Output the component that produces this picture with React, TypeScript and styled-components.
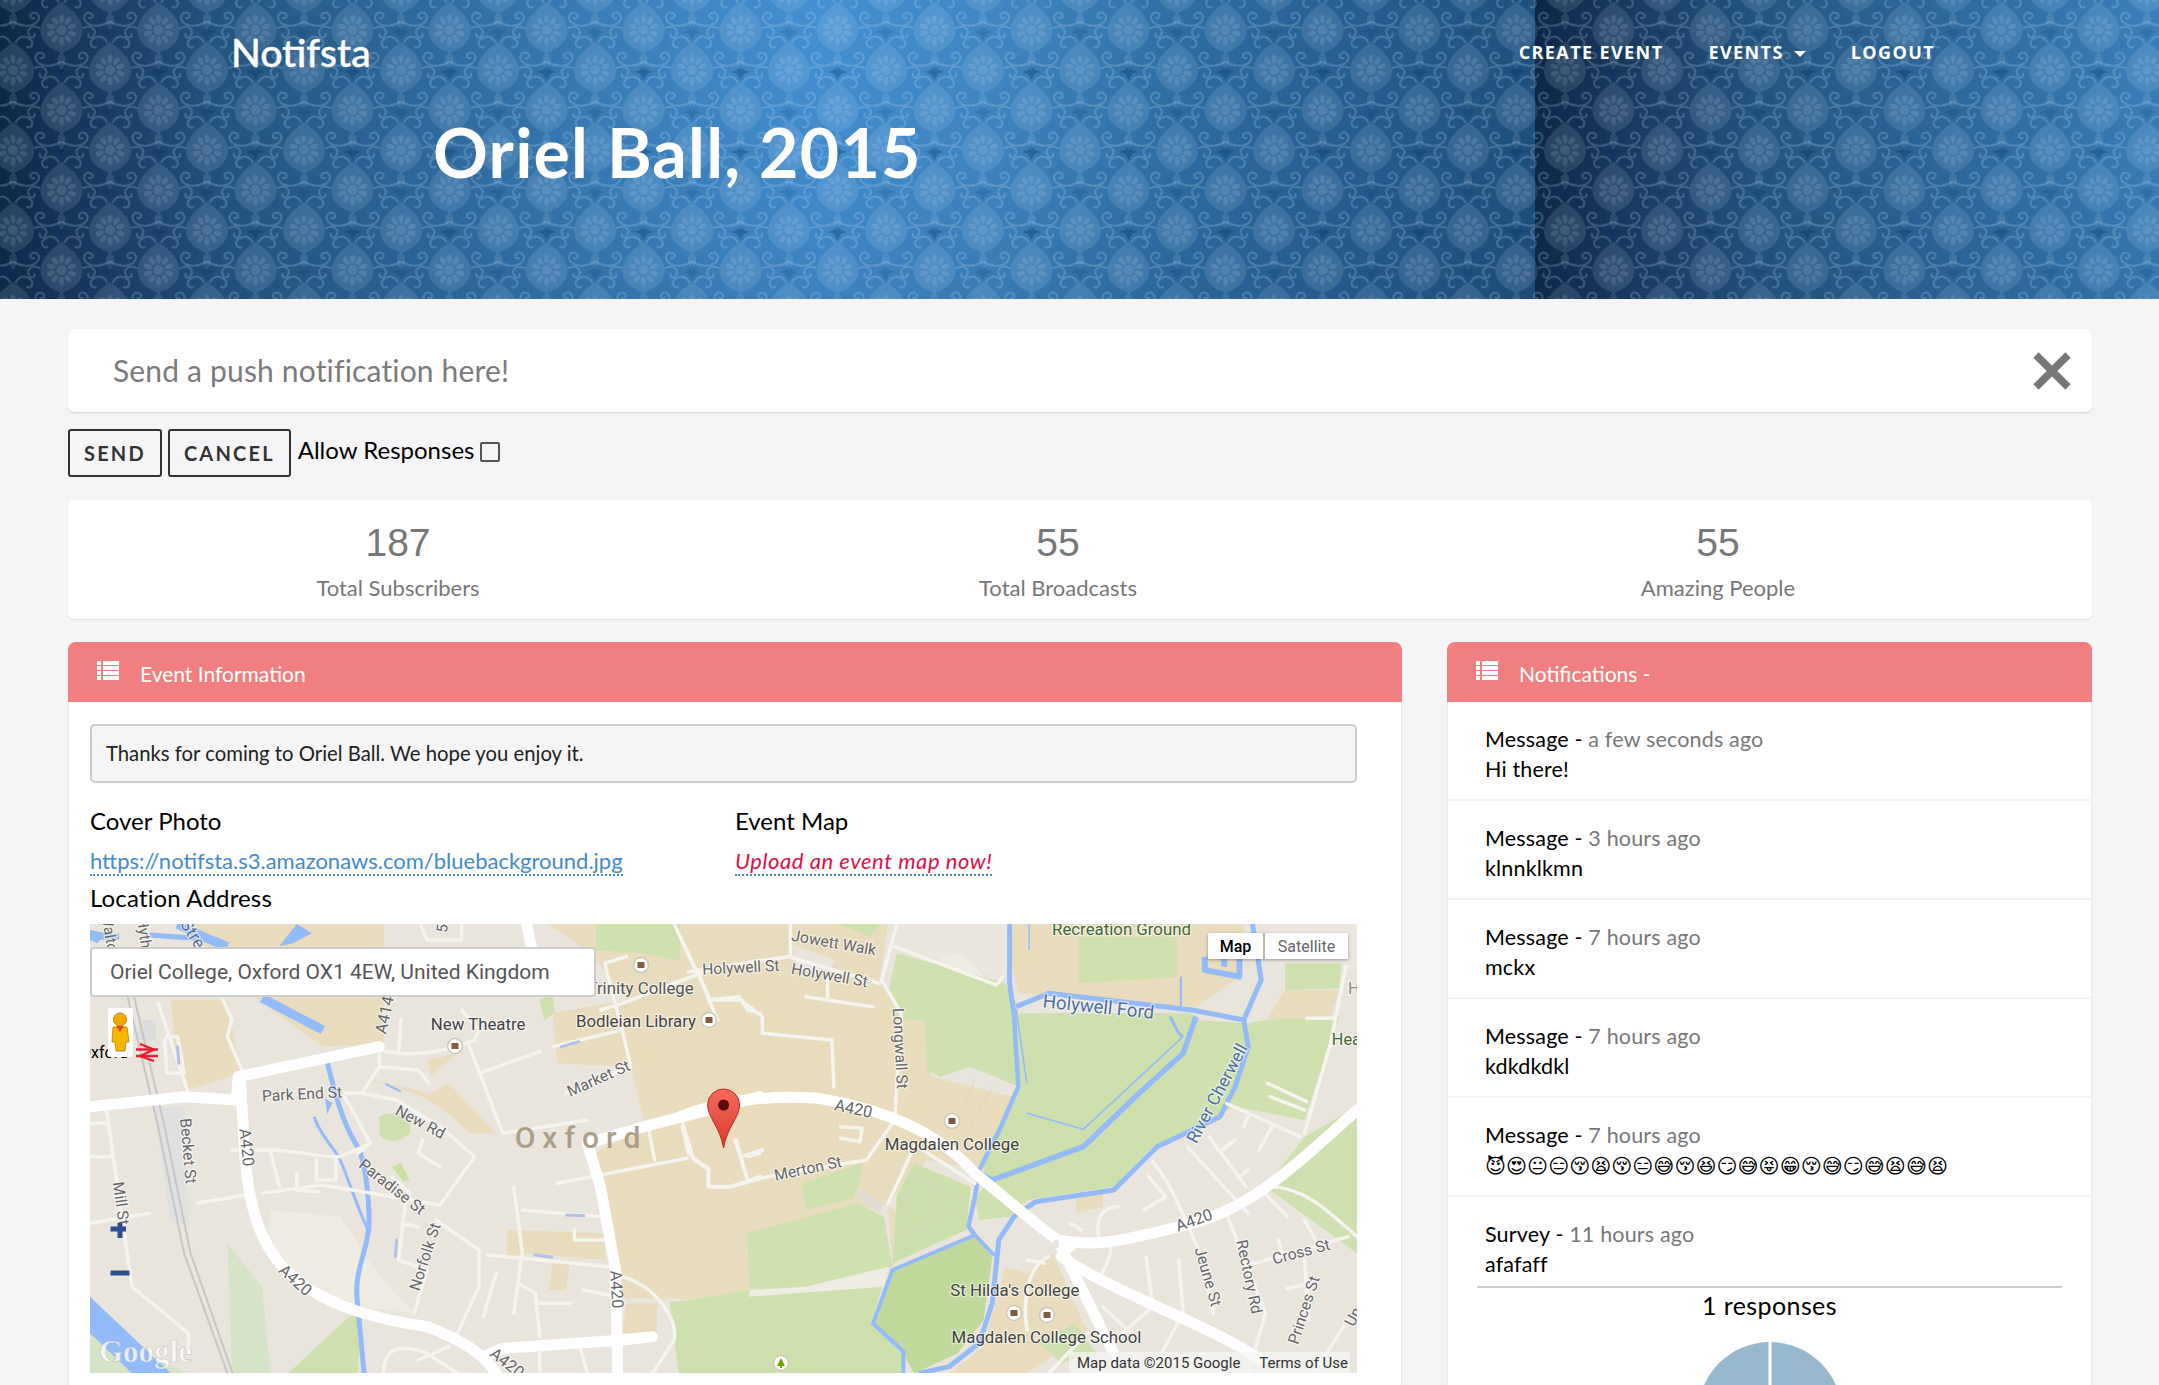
import React from 'react';
import styled, { createGlobalStyle } from 'styled-components';

const Global = createGlobalStyle`
  html, body { margin: 0; padding: 0; height: 1385px; overflow: hidden; background: #f5f5f7; }
  body { font-family: "Lato", "Noto Sans", sans-serif; color: #000; }
  * { box-sizing: border-box; }
`;

const Page = styled.div`
  width: 2159px;
  height: 1385px;
  overflow: hidden;
`;

const Hero = styled.header`
  position: relative;
  height: 299px;
  overflow: hidden;
  color: #fff;
  background-color: #1f4a75;
  background-image:
    linear-gradient(180deg, rgba(20, 50, 90, 0) 0%, rgba(20, 50, 90, 0.06) 60%, rgba(20, 50, 90, 0.16) 100%),
    linear-gradient(90deg, #0c2746 0, #173a5e 90px, #24547f 220px, #2f6a9e 420px, #3a7fba 620px, #4490d2 820px, #3f86c2 1000px, #2f6ea4 1180px, #275e90 1350px, #20507d 1534px);
  background-size: 100% 100%, 1535px 100%;
  background-repeat: no-repeat, repeat-x;
`;

const Wallpaper = styled.svg`
  position: absolute;
  inset: 0;
  width: 100%;
  height: 100%;
`;

const HeroContent = styled.div`
  position: relative;
  height: 100%;
  display: flex;
  flex-direction: column;
`;

const NavBar = styled.nav`
  display: flex;
  align-items: center;
  justify-content: space-between;
  padding: 26px 224px 0 231px;
  height: 78px;
`;

const Brand = styled.div`
  font-size: 39px;
  line-height: 52px;
  font-weight: 500;
  -webkit-text-stroke: 0.4px #fff;
`;

const NavLinks = styled.div`
  display: flex;
  align-items: center;
  gap: 45px;
`;

const NavLink = styled.a`
  font-family: "Open Sans", sans-serif;
  font-size: 18px;
  font-weight: 700;
  letter-spacing: 1.4px;
  text-transform: uppercase;
  line-height: 24px;
  display: flex;
  align-items: center;
  gap: 10px;
`;

const Caret = styled.span`
  width: 0;
  height: 0;
  margin-top: 4px;
  border-left: 6px solid transparent;
  border-right: 6px solid transparent;
  border-top: 6px solid #fff;
`;

const EventTitle = styled.h1`
  margin: 35px 0 0 433px;
  font-size: 68px;
  line-height: 78px;
  font-weight: 700;
  letter-spacing: 1.2px;
`;

const Main = styled.main`
  padding: 30px 67px 0 68px;
`;

const ComposeCard = styled.div`
  height: 83px;
  background: #fff;
  border-radius: 6px;
  box-shadow: 0 1px 2px rgba(0, 0, 0, 0.14);
  display: flex;
  align-items: center;
  justify-content: space-between;
  padding: 0 20px 2px 45px;
`;

const ComposeText = styled.div`
  font-size: 30px;
  color: #7b7b7b;
  letter-spacing: 0.17px;
`;

const CloseMark = styled.svg`
  margin-top: 2px;
`;

const ActionRow = styled.div`
  margin-top: 17px;
  display: flex;
  align-items: flex-start;
  gap: 6px;
`;

const OutlineButton = styled.button`
  height: 48px;
  padding: 0 14px;
  background: transparent;
  border: 2px solid #333;
  border-radius: 3px;
  color: #333;
  font-family: "Lato", sans-serif;
  font-size: 20px;
  font-weight: 700;
  letter-spacing: 2.2px;
`;

const AllowLabel = styled.label`
  display: flex;
  align-items: center;
  gap: 6px;
  font-size: 24px;
  line-height: 32px;
  margin: 5px 0 0 1px;
`;

const FakeCheck = styled.span`
  display: block;
  width: 20px;
  height: 20px;
  margin-top: 3px;
  border: 2px solid #555;
  border-radius: 2px;
`;

const StatsCard = styled.section`
  margin-top: 23px;
  height: 119px;
  background: #fff;
  border-radius: 6px;
  box-shadow: 0 1px 2px rgba(0, 0, 0, 0.08);
  padding: 18px 44px 0 0;
  display: grid;
  grid-template-columns: repeat(3, 1fr);
  text-align: center;
`;

const StatNumber = styled.div`
  font-family: "Liberation Sans", sans-serif;
  font-size: 39px;
  line-height: 50px;
  color: #777;
`;

const StatLabel = styled.div`
  margin-top: 6px;
  font-size: 22px;
  line-height: 28px;
  color: #777;
`;

const Columns = styled.div`
  margin-top: 23px;
  display: grid;
  grid-template-columns: 1334px 645px;
  gap: 45px;
`;

const Panel = styled.section`
  background: #fff;
  border-radius: 8px 8px 0 0;
  border-left: 1px solid #e8e8ee;
  border-right: 1px solid #e8e8ee;
`;

const PanelHead = styled.div`
  height: 60px;
  margin: 0 -1px;
  background: #f27f7f;
  border-radius: 8px 8px 0 0;
  color: #fff;
  display: flex;
  align-items: center;
  gap: 21px;
  padding: 2px 0 0 29px;
  font-size: 21px;
`;

const PanelIcon = styled.svg`
  width: 22px;
  height: 20px;
  margin-top: -5px;
  flex: none;
`;

const EventBody = styled.div`
  padding: 22px 44px 20px 21px;
`;

const Well = styled.div`
  height: 59px;
  background: #f5f5f5;
  border: 2px solid #ccc;
  border-radius: 5px;
  padding: 0 14px 2px;
  display: flex;
  align-items: center;
  font-size: 20.3px;
  color: #222;
`;

const InfoGrid = styled.div`
  margin-top: 23px;
  display: grid;
  grid-template-columns: 645px 1fr;
`;

const InfoLabel = styled.div`
  font-size: 24px;
  line-height: 30px;
`;

const LinkRow = styled.div`
  margin-top: 11px;
  height: 30px;
  line-height: 27px;
  font-size: 22px;
`;

const DottedLink = styled.a<{ $alert?: boolean }>`
  display: inline-block;
  height: 29px;
  border-bottom: 2px dotted #428bca;
  color: ${p => (p.$alert ? '#dd1144' : '#428bca')};
  font-style: ${p => (p.$alert ? 'italic' : 'normal')};
  letter-spacing: ${p => (p.$alert ? '0.55px' : '0')};
`;

const LocationLabel = styled(InfoLabel)`
  margin-top: 6px;
  letter-spacing: 0.15px;
`;

const MapFrame = styled.div`
  position: relative;
  margin-top: 11px;
  width: 1267px;
  height: 449px;
  overflow: hidden;
  background: #e9e5dc;
`;

const MapDrawing = styled.svg`
  display: block;
  width: 1267px;
  height: 449px;
`;

const MapSearch = styled.div`
  position: absolute;
  left: 0;
  top: 23px;
  width: 506px;
  height: 50px;
  background: #fff;
  border: 2px solid #ccc;
  border-radius: 4px;
  padding-left: 18px;
  display: flex;
  align-items: center;
  font-family: "Roboto", sans-serif;
  font-size: 21px;
  color: #555;
`;

const MapTypes = styled.div`
  position: absolute;
  left: 1118px;
  top: 9px;
  display: flex;
  gap: 2px;
  box-shadow: 0 1px 3px rgba(0, 0, 0, 0.35);
  background: #b9b9a8;
  font-family: "Roboto", sans-serif;
  font-size: 16px;
`;

const MapType = styled.div<{ $active?: boolean }>`
  height: 26px;
  width: ${p => (p.$active ? '55px' : '83px')};
  background: #fff;
  display: flex;
  align-items: center;
  justify-content: center;
  color: ${p => (p.$active ? '#000' : '#666')};
  font-weight: ${p => (p.$active ? 500 : 400)};
`;

const Attribution = styled.div`
  position: absolute;
  right: 7px;
  bottom: 0;
  width: 281px;
  height: 21px;
  padding: 0 2px 0 8px;
  background: rgba(245, 245, 245, 0.72);
  font-family: "Roboto", sans-serif;
  font-size: 15px;
  color: #333;
  display: flex;
  justify-content: space-between;
  align-items: center;
`;

const NoteItem = styled.article`
  padding: 24px 30px 15px 37px;
  border-bottom: 2px solid #f3f3f7;
  font-size: 21.5px;
  line-height: 29px;
  letter-spacing: 0.17px;
`;

const SurveyItem = styled.article`
  padding: 24px 30px 0 37px;
  font-size: 21.5px;
  line-height: 29px;
  letter-spacing: 0.17px;
`;

const NoteHeading = styled.div`
  margin-top: -1px;
  margin-bottom: 1px;
`;

const NoteTime = styled.span`
  color: #777;
`;

const EmojiLine = styled.div`
  font-family: "DejaVu Sans", sans-serif;
  font-size: 20.2px;
  letter-spacing: 0;
  line-height: 29px;
  padding-top: 1px;
  height: 29px;
  white-space: nowrap;
`;

const SurveyRule = styled.hr`
  margin: 7px 0 0 -8px;
  width: 585px;
  height: 2px;
  border: 0;
  background: #ccc;
`;

const ResponseCount = styled.div`
  margin: 1px 0 0 -8px;
  width: 585px;
  text-align: center;
  font-size: 25px;
  line-height: 32px;
  letter-spacing: 0.4px;
`;

const PieChart = styled.svg`
  display: block;
  margin: 20px 0 0 212px;
`;

const ListIcon = () => (
  <PanelIcon viewBox="0 0 22 20">
    {[0, 5, 10, 15].map(y => (
      <g key={y} fill="#fff">
        <rect x="0" y={y} width="4" height="4" />
        <rect x="6" y={y} width="16" height="4" />
      </g>
    ))}
  </PanelIcon>
);

const notes = [
  ['a few seconds ago', 'Hi there!'],
  ['3 hours ago', 'klnnklkmn'],
  ['7 hours ago', 'mckx'],
  ['7 hours ago', 'kdkdkdkl'],
];

const petalAngles = [0, 36, 72, 108, 144, 180, 216, 252, 288, 324];

const Motif = () => (
  <g>
    <path d="M0 -30 C9 -24 21 -14 21 -1 C21 10 11 17 0 21 C-11 17 -21 10 -21 -1 C-21 -14 -9 -24 0 -30Z" fill="#cfe8ff" opacity=".13" />
    {petalAngles.map(a => (
      <ellipse key={a} cx="0" cy="-11" rx="2.4" ry="4.2" fill="#d8eeff" opacity=".13" transform={`translate(0,-2) rotate(${a})`} />
    ))}
    <ellipse cx="0" cy="-2" rx="5" ry="5" fill="#d8eeff" opacity=".12" />
    <path d="M0 20 C5 24 6 30 0 38 C-6 30 -5 24 0 20Z" fill="#cfe8ff" opacity=".12" />
    <g fill="none" stroke="#cfe8ff" strokeWidth="2.2" opacity=".2" strokeLinecap="round">
      <path d="M1 30 C7 34 18 36 24 30 C29 24 23 18 18 22 C16 25 19 27 21 26" />
      <path d="M-1 30 C-7 34 -18 36 -24 30 C-29 24 -23 18 -18 22 C-16 25 -19 27 -21 26" />
      <path d="M3 -30 C5 -34 10 -38 17 -33 C22 -29 18 -23 14 -25" />
      <path d="M-3 -30 C-5 -34 -10 -38 -17 -33 C-22 -29 -18 -23 -14 -25" />
      <path d="M22 -4 C30 -8 36 -2 32 4 C30 7 26 5 27 2" />
      <path d="M-22 -4 C-30 -8 -36 -2 -32 4 C-30 7 -26 5 -27 2" />
    </g>
    <path d="M48.5 -8 L52 -2 L58 0 L52 2 L48.5 8 L45 2 L39 0 L45 -2Z" fill="#0d3560" opacity=".16" />
    <path d="M-48.5 -8 L-45 -2 L-39 0 L-45 2 L-48.5 8 L-52 2 L-58 0 L-52 -2Z" fill="#0d3560" opacity=".16" />
  </g>
);

const tan = '#e8dcbc';
const green = '#cde0ae';
const water = '#94bbf9';
const minorColor = '#f6f4ef';

const areaA: [string, string][] = [
  ['M240 12 L700 12 L700 370 L560 380 L400 230 L290 80Z', tan],
  ['M1080 12 H1568 V1135 H1240 L1185 700 L1310 620 L1300 600 L1270 440 L1100 430 L1090 280 L1260 240 L1180 100Z', tan],
  ['M210 240 L340 240 L370 460 L250 510 L220 400Z', tan],
  ['M670 480 L810 520 L850 490 L960 640 L900 640 L840 570 L790 530Z', tan],
  ['M800 420 L870 400 L810 470Z', tan],
  ['M985 930 L1210 940 L1210 1020 L1030 1000 L985 1010Z', tan],
  ['M1090 1030 L1130 1030 L1120 1110 L1080 1110Z', tan],
  ['M1260 1150 L1330 1150 L1330 1240 L1250 1240Z', tan],
  ['M1090 220 L1060 240 L1070 300 L1095 280Z', green],
  ['M1190 12 L1380 12 L1440 140 L1300 100 L1190 90Z', green],
  ['M1360 1145 L1568 1135 V1360 H1380Z', green],
  ['M480 1360 L620 1190 L650 1180 L640 1360Z', green],
  ['M340 970 L420 1100 L440 1360 H350Z', '#d5e4c6'],
  ['M23 1230 L250 1360 H23Z', '#d5e4c6'],
  ['M440 870 L600 890 L680 1050 L770 1180 L640 1160 L540 1120 L430 1000Z', '#efece4'],
  ['M170 560 L240 560 L250 910 L210 910Z', '#e0e0e0'],
  ['M690 590 C730 560 770 600 760 640 C740 670 700 670 690 640Z', green],
  ['M720 740 L740 730 L760 780 L745 785Z', '#c9de9f'],
  ['M135 300 H175 V360 H135Z', '#dcdcdc'],
];

const areaB: [string, string][] = [
  ['M0 12 L480 12 L460 180 L520 300 L570 300 L580 470 L770 530 L745 600 L690 750 L570 720 L480 850 L155 940 L160 1135 L0 1140Z', tan],
  ['M500 100 L750 190 L780 260 L780 500 L670 440 L600 470 L570 450 L565 300 L520 300 L480 220Z', green],
  ['M365 12 L460 12 L440 50Z', green],
  ['M260 75 L360 120 L340 160 L270 150Z', '#e9e5dc'],
  ['M500 12 L760 12 L750 170 L540 90Z', '#ebe7de'],
  ['M590 130 C620 80 660 100 700 170Z', '#efece4'],
  ['M770 12 L1300 12 L1290 170 L1180 270 L780 220 L760 100Z', tan],
  ['M920 50 H1145 V170 L920 190Z', green],
  ['M1350 12 H1561 V140 H1350Z', '#ebe7de'],
  ['M1395 130 H1525 L1520 205 L1395 210Z', green],
  ['M1395 210 L1520 210 L1500 290 L1350 310 L1380 240Z', tan],
  ['M780 280 L1180 280 L1200 300 L1100 460 L930 700 L700 790 L700 720 L780 500Z', green],
  ['M1190 300 L1310 310 L1350 300 L1520 290 L1440 600 L1280 560 L1090 680 L1000 800 L800 840 L760 890 L690 900 L680 830 L720 780 L930 690 L1070 510Z', green],
  ['M1561 560 V1000 L1350 800 L1440 650Z', green],
  ['M155 940 L410 850 L470 890 L490 1040 L290 1105 H160Z', green],
  ['M0 1145 L480 1040 L440 1210 L510 1300 V1360 H0Z', green],
  ['M490 1050 L680 950 L720 1010 L700 1200 L640 1300 L540 1360 L510 1290 L450 1210Z', '#c0d99c'],
  ['M160 1110 L290 1100 L480 1040 L470 1100 L160 1130Z', '#efece4'],
  ['M280 790 L420 730 L410 830 L290 870Z', green],
  ['M620 1360 L700 1280 L750 1040 L800 1060 L860 1000 L940 1240 L800 1360Z', tan],
  ['M830 1270 L910 1210 L960 1300 L880 1330Z', green],
  ['M910 830 L975 820 V860 L915 880Z', tan],
  ['M480 860 L540 900 L490 1040Z', tan],
  ['M500 830 L540 730 L670 800 L660 930 L490 1030Z', '#cbdfab'],
  ['M410 800 L470 850 L460 880 L400 830Z', '#e1dccf'],
];

const waterA: [string, number][] = [
  ['M23 50 L90 50', 6],
  ['M160 45 L320 60', 5],
  ['M225 12 C280 50 320 70 340 80', 9],
  ['M420 235 L560 330', 9],
  ['M565 400 C580 480 600 600 640 680 C660 730 670 870 665 940', 5],
  ['M665 930 C660 1000 630 1060 640 1150 L655 1360', 5],
  ['M540 590 C550 640 590 690 600 720 C620 780 650 900 665 930', 3],
  ['M705 492 L740 515', 2],
];

const waterPolysA = [
  'M500 12 L535 40 L490 70 L460 78Z',
  'M23 1130 L210 1360 H120 L23 1240Z',
  'M565 535 L582 550 L570 582Z',
  'M23 30 L60 40 L40 70 L23 60Z',
];

const waterB: [string, number][] = [
  ['M760 12 L760 190 L770 280', 5],
  ['M770 280 L780 500 L740 620 L690 750 L680 830 L665 920 L680 945', 4.5],
  ['M775 260 L850 220 L1180 270 L1300 300 L1340 180 L1320 12', 5],
  ['M1190 290 L1160 400 L1050 530 L930 680 L720 780 L690 760', 5.5],
  ['M1300 300 L1310 380 L1280 500 L1245 590 L1100 680 L1000 810 L820 845 L770 890 L735 960 L720 1150 L690 1270 L620 1340 L550 1360', 5],
  ['M680 945 L490 1050 L445 1210 L515 1295 V1360', 4],
  ['M680 945 L720 1000 L735 1010', 4],
  ['M800 580 L930 628 L1160 350', 1.5],
  ['M775 270 L800 490', 1.5],
  ['M1130 290 L1150 340 L1160 350', 3],
  ['M1155 170 V260', 2],
  ['M805 12 V90', 1.5],
  ['M1210 110 V150 L1290 170 V110 M1255 110 L1255 140', 6],
];

const minorA = [
  'M60 560 L120 1100 L250 1240 L250 1300',
  'M23 910 L160 880',
  'M330 240 L350 300 L340 350 L380 470',
  'M180 250 L250 520',
  'M200 350 H225 L240 460 L200 460 L195 360',
  'M23 610 H60', 'M23 710 H70',
  'M270 850 L380 825',
  'M350 690 H440 C500 690 560 715 600 710 L670 670',
  'M440 700 L460 800',
  'M420 820 L555 795 L630 810 L830 855 L910 710 L830 620 L730 540 L650 520 L610 520',
  'M545 720 V780 H590 L590 710',
  'M500 760 V810 L550 815',
  'M610 530 L670 670 L640 700',
  'M690 380 L690 440 L650 520', 'M690 440 L780 450 L805 490',
  'M690 390 C750 410 800 400 860 385', 'M740 300 L735 390',
  'M880 270 L920 330 L910 360 L860 385',
  'M895 370 L975 640 L1170 600', 'M920 460 L1060 395',
  'M1090 380 L1250 330', 'M1120 520 L1270 440 L1250 330 L1210 130 L1260 110',
  'M1200 270 L1250 250 L1450 150', 'M1420 150 L1370 12',
  'M1450 240 L1520 230 L1540 270 L1568 280', 'M1470 300 L1450 240 L1430 170',
  'M1000 800 L1020 1000 L1000 1180', 'M1020 870 L1200 890', 'M1140 930 V960 H1210', 'M1100 790 L1400 715',
  'M940 1005 L1220 1040', 'M1310 620 L1325 720',
  'M1390 610 L1415 720 L1450 745 V800 H1500 L1568 770', 'M1510 660 L1540 780', 'M1540 710 L1568 700',
  'M820 900 L920 990 L920 1100 L870 1240',
  'M750 850 L735 1020 L800 1050 L770 1180', 'M740 910 L780 920', 'M790 660 L780 700 L830 740', 'M720 770 L760 820',
  'M1060 1150 H1130', 'M960 1060 L930 1190', 'M1010 1090 L1050 1120 L1060 1250', 'M1160 1110 L1240 1130',
  'M1150 1270 L1170 1360', 'M1060 1280 V1360',
  'M700 1360 C700 1280 740 1270 800 1300 L870 1360', 'M780 1320 L850 1280',
  'M1250 1070 C1330 1100 1380 1200 1370 1260 L1320 1360',
  'M785 12 L800 60 H880 V12',
];

const minorB = [
  'M0 50 L70 240 L140 240 L190 290 V340 L350 360 L355 500',
  'M20 155 L250 110 L460 190', 'M290 230 L445 260', 'M340 170 V230', 'M255 12 V110',
  'M500 12 L465 180 L510 280 L495 600 L430 720 L200 770 L120 800 L65 800 V750 L20 700 L5 620',
  'M130 660 L155 780', 'M140 710 L190 690',
  'M495 80 L730 195 L745 170',
  'M370 620 L420 625 L415 665 L370 655',
  'M540 680 L480 850', 'M560 690 L680 790',
  'M1355 490 L1445 545', 'M1360 530 L1440 570', 'M1260 550 L1430 650',
  'M1535 140 L1500 370 L1440 640', 'M1445 295 H1510',
  'M1310 590 L1300 620', 'M1365 620 L1335 690',
  'M1090 725 C1140 800 1180 950 1200 1000 L1230 1180', 'M1080 770 L1120 830 L1070 870', 'M1170 680 L1310 880',
  'M1220 650 L1305 800', 'M1250 690 L1280 660', 'M1290 770 L1310 750',
  'M1260 880 L1350 1180 L1310 1360',
  'M1345 815 L1400 890', 'M1360 800 C1440 800 1500 880 1561 950',
  'M1300 1040 L1540 950', 'M1440 900 L1470 970', 'M1380 960 L1390 1010', 'M1440 1020 L1450 1200', 'M1400 1105 L1460 1090',
  'M1010 860 C970 860 960 900 965 950', 'M900 910 L925 930', 'M995 960 C995 1010 980 1050 965 1070',
  'M1075 1010 L1090 1160 L1020 1240', 'M1150 1020 L1160 1180 L1110 1300',
  'M975 1160 L1040 1240', 'M800 1020 L840 1030', 'M850 1010 C800 1040 790 1140 800 1230',
  'M1540 1200 L1460 1360', 'M850 1360 L940 1240',
];

const majorA = [
  'M23 560 L240 530 L360 540',
  'M360 540 L365 470 L690 380',
  'M370 480 L380 700 C390 900 430 1020 520 1100 C600 1170 700 1200 800 1220 C880 1260 930 1300 960 1360',
  'M930 1310 L975 1285 L1250 1260 L1320 1250',
  'M1240 1360 L1235 1050 L1200 800 L1170 670 L1300 620 L1568 530',
  'M1030 12 L1042 90',
];

const majorB = [
  'M0 590 C100 540 200 525 320 535 C480 570 600 640 680 760 L830 920 L870 960 L900 980',
  'M870 960 C950 980 1000 970 1150 920 C1300 880 1400 760 1561 570',
  'M870 960 L1000 1300',
  'M880 1010 C1000 1120 1200 1200 1340 1320',
];

type Lab = { t: string; x: number; y: number; r?: number; s?: number; f?: string; a?: 'start' | 'end' | 'middle' };

const labelsA: Lab[] = [
  { t: 'Street', x: 270, y: 60, r: 58, s: 15, f: '#5a7390' },
  { t: 'Walton', x: 70, y: 50, r: 80, s: 13 },
  { t: 'Hythe', x: 150, y: 50, r: 82, s: 13 },
  { t: 'A414', x: 702, y: 285, r: -78, s: 14 },
  { t: '5', x: 835, y: 25, r: -85, s: 13 },
  { t: 'New Theatre', x: 918, y: 312, s: 14.5, f: '#444' },
  { t: 'Bodleian Library', x: 1282, y: 303, s: 14.5, f: '#444' },
  { t: 'Trinity College', x: 1415, y: 205, s: 14.5, f: '#555', a: 'end' },
  { t: 'Market St', x: 1195, y: 475, r: -24, s: 13.5 },
  { t: 'Park End St', x: 512, y: 522, r: -3, s: 13.5 },
  { t: 'New Rd', x: 785, y: 605, r: 28, s: 13.5 },
  { t: 'Becket St', x: 250, y: 693, r: 85, s: 13.5 },
  { t: 'A420', x: 385, y: 682, r: 84, s: 14 },
  { t: 'A420', x: 497, y: 1080, r: 42, s: 14 },
  { t: 'A420', x: 1238, y: 1108, r: 87, s: 14 },
  { t: 'A420', x: 985, y: 1328, r: 38, s: 14 },
  { t: 'Mill St', x: 95, y: 850, r: 82, s: 13.5 },
  { t: 'Paradise St', x: 720, y: 800, r: 38, s: 13.5 },
  { t: 'Norfolk St', x: 795, y: 1010, r: -72, s: 13.5 },
];

const labelsB: Lab[] = [
  { t: 'Jowett Walk', x: 355, y: 68, r: 10, s: 13.5 },
  { t: 'Holywell St', x: 140, y: 142, r: -3, s: 13.5 },
  { t: 'Holywell St', x: 345, y: 165, r: 10, s: 13.5 },
  { t: 'Longwall St', x: 508, y: 385, r: 87, s: 13.5 },
  { t: 'A420', x: 400, y: 565, r: 12, s: 14 },
  { t: 'Merton St', x: 295, y: 745, r: -12, s: 13.5 },
  { t: 'Magdalen College', x: 627, y: 672, s: 14.5, f: '#444' },
  { t: "St Hilda's College", x: 772, y: 1110, s: 14.5, f: '#444' },
  { t: 'Magdalen College School', x: 845, y: 1252, s: 14.5, f: '#444' },
  { t: 'Recreation Ground', x: 1018, y: 28, s: 14.5, f: '#3d6b35' },
  { t: 'Holywell Ford', x: 965, y: 260, r: 6, s: 16, f: '#4c6f9e' },
  { t: 'River Cherwell', x: 1238, y: 520, r: -62, s: 15, f: '#4c6f9e' },
  { t: 'A420', x: 1185, y: 900, r: -20, s: 14 },
  { t: 'Jeune St', x: 1218, y: 1070, r: 74, s: 13.5 },
  { t: 'Rectory Rd', x: 1313, y: 1070, r: 78, s: 13.5 },
  { t: 'Cross St', x: 1432, y: 995, r: -15, s: 13.5 },
  { t: 'Princes St', x: 1438, y: 1170, r: -72, s: 13.5 },
  { t: 'Un', x: 1552, y: 1190, r: -62, s: 13.5 },
  { t: 'Hea', x: 1503, y: 358, s: 14, f: '#3d6b35', a: 'start' },
  { t: 'H', x: 1540, y: 205, s: 14, f: '#888', a: 'start' },
];

const SX = 0.4337;
const SY = 1 / 3;
const transformA = `translate(-10,-4) scale(${SX},${SY})`;
const transformB = `translate(590,-4) scale(${SX},${SY})`;

const MapLabels = ({ list, ox }: { list: Lab[]; ox: number }) => (
  <g fontFamily="Roboto, sans-serif" style={{ paintOrder: 'stroke' }} stroke="#fff" strokeWidth="2.5" strokeOpacity=".55">
    {list.map(l => {
      const x = l.x * SX + ox;
      const y = l.y * SY - 4;
      return (
        <text
          key={l.t + l.x}
          x={x}
          y={y}
          dy=".35em"
          fontSize={(l.s ?? 13.5) * 1.16}
          fill={l.f ?? '#666'}
          textAnchor={l.a ?? 'middle'}
          transform={l.r ? `rotate(${l.r} ${x} ${y})` : undefined}
        >
          {l.t}
        </text>
      );
    })}
  </g>
);

const Lines = ({ list, color, width, t }: { list: string[]; color: string; width: number; t: string }) => (
  <g transform={t} fill="none" stroke={color} strokeLinejoin="round" strokeLinecap="round">
    {list.map(d => (
      <path key={d} d={d} strokeWidth={width} vectorEffect="non-scaling-stroke" />
    ))}
  </g>
);

const Poi = ({ x, y, c, tree }: { x: number; y: number; c: string; tree?: boolean }) => (
  <g>
    <circle cx={x} cy={y} r="7.5" fill="#fff" stroke="#cfc7b5" strokeWidth="1.5" />
    {tree ? (
      <path d={`M${x} ${y - 5} L${x + 4} ${y + 3} H${x + 1} V${y + 5} H${x - 1} V${y + 3} H${x - 4}Z`} fill={c} />
    ) : (
      <rect x={x - 3.5} y={y - 3} width="7" height="6" fill={c} />
    )}
  </g>
);

const CityMap = () => (
  <MapDrawing viewBox="0 0 1267 449">
    <defs>
      <linearGradient id="pinFill" x1="0" y1="0" x2="0" y2="1">
        <stop offset="0" stopColor="#f76a5d" />
        <stop offset="1" stopColor="#d93a2e" />
      </linearGradient>
    </defs>
    <rect width="1267" height="449" fill="#e9e5dc" />
    <g transform={transformA}>
      {areaA.map(([d, c]) => <path key={d} d={d} fill={c} />)}
    </g>
    <g transform={transformB}>
      {areaB.map(([d, c]) => <path key={d} d={d} fill={c} />)}
    </g>
    <g transform={transformA}>
      {waterPolysA.map(d => <path key={d} d={d} fill={water} />)}
      {waterA.map(([d, w]) => (
        <path key={d} d={d} fill="none" stroke={water} strokeWidth={w} vectorEffect="non-scaling-stroke" strokeLinejoin="round" />
      ))}
    </g>
    <g transform={transformB}>
      {waterB.map(([d, w]) => (
        <path key={d} d={d} fill="none" stroke={water} strokeWidth={w} vectorEffect="non-scaling-stroke" strokeLinejoin="round" />
      ))}
    </g>
    <Lines t={transformA} color="#c6c6c4" width={2} list={['M110 232 L180 620 L240 1000 L340 1360', 'M125 232 L195 620 L255 1000 L352 1360']} />
    <Lines t={transformA} color={minorColor} width={3.5} list={minorA} />
    <Lines t={transformB} color={minorColor} width={3.5} list={minorB} />
    <Lines t={transformB} color="#d9d5c6" width={1} list={['M520 760 L660 840', 'M560 730 L500 900', 'M610 760 L550 940', 'M500 950 L660 850', 'M680 480 L640 600', 'M720 500 L670 620']} />
    <Lines t={transformA} color="#fff" width={11} list={majorA} />
    <Lines t={transformB} color="#fff" width={11} list={majorB} />
    <Lines t={transformA} color="#b3bfe9" width={3} list={['M1110 380 L1150 365', 'M1122 885 L1162 887', 'M1048 1004 L1088 1012', 'M730 960 L727 1010', 'M225 380 L228 430']} />
    <ellipse cx="966" cy="320" rx="3" ry="4.5" fill="#e9e5dc" />
    <MapLabels list={labelsA} ox={-10} />
    <MapLabels list={labelsB} ox={590} />
    <text x="491" y="213" dy=".35em" textAnchor="middle" fontFamily="Roboto, sans-serif" fontWeight="500" fontSize="30" letterSpacing="7" fill="#ad9f87">Oxford</text>
    <text x="-10" y="134" fontFamily="Roboto, sans-serif" fontSize="16" fill="#000">Oxford</text>
    <Poi x={365} y={122} c="#8a5a3c" />
    <Poi x={619} y={96} c="#8a5a3c" />
    <Poi x={551} y={41} c="#8a5a3c" />
    <Poi x={862} y={197} c="#7f5a40" />
    <Poi x={924} y={389} c="#7f5a40" />
    <Poi x={957} y={391} c="#7f5a40" />
    <Poi x={691} y={439} c="#6aa600" tree />
    <path d="M633.6 224 C630 203 617.6 193 617.6 181 A16 16 0 1 1 649.6 181 C649.6 193 637 203 633.6 224Z" fill="url(#pinFill)" stroke="#b52a20" strokeWidth="1" />
    <circle cx="633.6" cy="181" r="5.5" fill="#560c0a" />
    <rect x="18" y="84" width="25" height="49" rx="2" fill="#fff" />
    <circle cx="30" cy="95.5" r="6.5" fill="#f5a800" stroke="#c07f00" />
    <path d="M23 103 L37 103 L39 118 H36 L35 127 H26 L25 118 H22Z" fill="#f7b500" stroke="#b57a00" strokeWidth=".8" />
    <path d="M26 102 H34 L30 108Z" fill="#d94a2a" />
    <g stroke="#ec1c2e" strokeWidth="2.3" fill="none">
      <path d="M46 125.5 H68 M46 132 H68" />
      <path d="M50 120 L64 125.5 L50 132 L64 137" />
    </g>
    <path d="M27.5 301 H32.5 V304.5 H36 V309.5 H32.5 V316 H27.5 V309.5 H20.5 V304.5 H27.5Z" fill="#2b4f8f" transform="translate(0,-2)" />
    <rect x="20.5" y="346.5" width="19" height="5" fill="#2b4f8f" />
    <text x="9" y="438" fontFamily="Liberation Serif, serif" fontSize="31" fontWeight="700" fill="#fff" fillOpacity=".75" stroke="#9a9a9a" strokeOpacity=".5" strokeWidth=".6">Google</text>
  </MapDrawing>
);

const App = () => (
  <Page>
    <Global />
    <Hero>
      <Wallpaper aria-hidden="true">
        <defs>
          <pattern id="damask" patternUnits="userSpaceOnUse" width="97" height="80" x="13" y="-8">
            <g transform="translate(0,0)"><Motif /></g>
            <g transform="translate(97,0)"><Motif /></g>
            <g transform="translate(0,80)"><Motif /></g>
            <g transform="translate(97,80)"><Motif /></g>
            <g transform="translate(48.5,40)"><Motif /></g>
          </pattern>
          <filter id="soften" x="0" y="0" width="100%" height="100%">
            <feGaussianBlur stdDeviation="0.6" />
          </filter>
        </defs>
        <rect width="100%" height="100%" fill="url(#damask)" filter="url(#soften)" />
      </Wallpaper>
      <HeroContent>
        <NavBar>
          <Brand>Notifsta</Brand>
          <NavLinks>
            <NavLink>Create Event</NavLink>
            <NavLink>Events <Caret /></NavLink>
            <NavLink>Logout</NavLink>
          </NavLinks>
        </NavBar>
        <EventTitle>Oriel Ball, 2015</EventTitle>
      </HeroContent>
    </Hero>
    <Main>
      <ComposeCard>
        <ComposeText>Send a push notification here!</ComposeText>
        <CloseMark width="40" height="40" viewBox="0 0 40 40" aria-label="Close">
          <path d="M4 4 L36 36 M36 4 L4 36" stroke="#777" strokeWidth="7.5" />
        </CloseMark>
      </ComposeCard>
      <ActionRow>
        <OutlineButton>SEND</OutlineButton>
        <OutlineButton>CANCEL</OutlineButton>
        <AllowLabel>Allow Responses <FakeCheck /></AllowLabel>
      </ActionRow>
      <StatsCard>
        <div><StatNumber>187</StatNumber><StatLabel>Total Subscribers</StatLabel></div>
        <div><StatNumber>55</StatNumber><StatLabel>Total Broadcasts</StatLabel></div>
        <div><StatNumber>55</StatNumber><StatLabel>Amazing People</StatLabel></div>
      </StatsCard>
      <Columns>
        <Panel>
          <PanelHead><ListIcon />Event Information</PanelHead>
          <EventBody>
            <Well>Thanks for coming to Oriel Ball. We hope you enjoy it.</Well>
            <InfoGrid>
              <div>
                <InfoLabel>Cover Photo</InfoLabel>
                <LinkRow><DottedLink>https://notifsta.s3.amazonaws.com/bluebackground.jpg</DottedLink></LinkRow>
              </div>
              <div>
                <InfoLabel>Event Map</InfoLabel>
                <LinkRow><DottedLink $alert>Upload an event map now!</DottedLink></LinkRow>
              </div>
            </InfoGrid>
            <LocationLabel>Location Address</LocationLabel>
            <MapFrame>
              <CityMap />
              <MapSearch>Oriel College, Oxford OX1 4EW, United Kingdom</MapSearch>
              <MapTypes>
                <MapType $active>Map</MapType>
                <MapType>Satellite</MapType>
              </MapTypes>
              <Attribution><span>Map data ©2015 Google</span><span>Terms of Use</span></Attribution>
            </MapFrame>
          </EventBody>
        </Panel>
        <Panel>
          <PanelHead><ListIcon />Notifications -</PanelHead>
          {notes.map(([time, body]) => (
            <NoteItem key={body}>
              <NoteHeading>Message - <NoteTime>{time}</NoteTime></NoteHeading>
              <div>{body}</div>
            </NoteItem>
          ))}
          <NoteItem>
            <NoteHeading>Message - <NoteTime>7 hours ago</NoteTime></NoteHeading>
            <EmojiLine>😈😍😐😑😚😫😚😑😅😚😆😏😅😝😁😚😅😏😅😫😅😫</EmojiLine>
          </NoteItem>
          <SurveyItem>
            <NoteHeading>Survey - <NoteTime>11 hours ago</NoteTime></NoteHeading>
            <div>afafaff</div>
            <SurveyRule />
            <ResponseCount>1 responses</ResponseCount>
            <PieChart width="146" height="146" viewBox="0 0 146 146">
              <circle cx="73" cy="73" r="72" fill="#98b9cd" />
              <path d="M73 0 V73" stroke="#fff" strokeWidth="3" />
            </PieChart>
          </SurveyItem>
        </Panel>
      </Columns>
    </Main>
  </Page>
);

export default App;
